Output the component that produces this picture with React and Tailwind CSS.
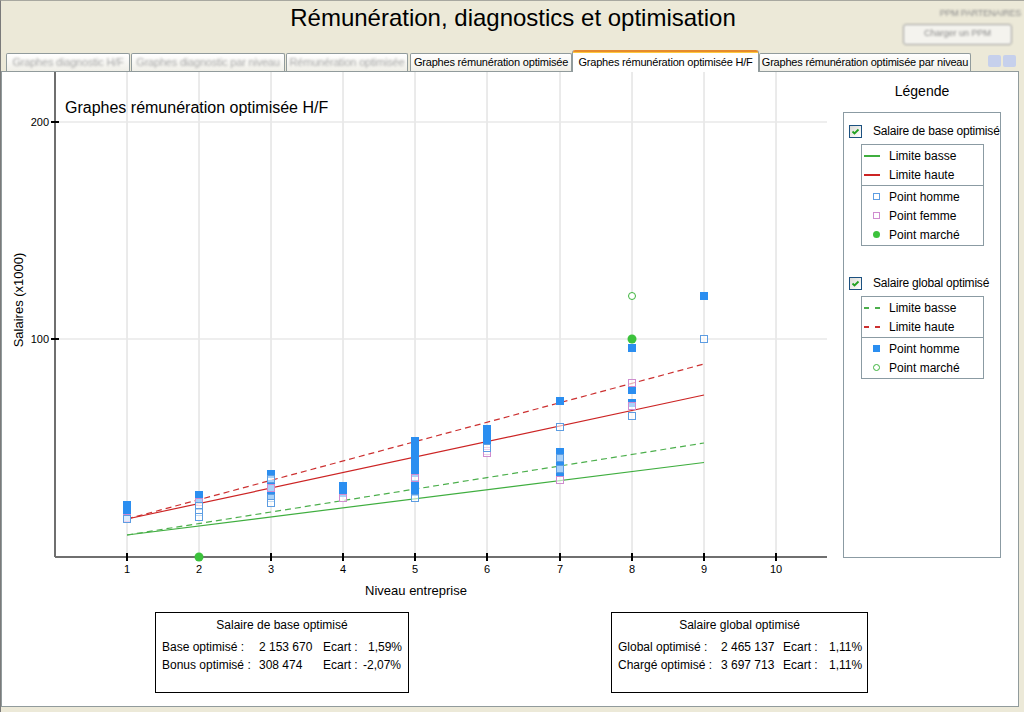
import React from 'react';

const FONT = { fontFamily: '"Liberation Sans", Arial, sans-serif' };

const levelX = [127, 199, 271, 343, 415, 487, 560, 632, 704, 776];
const X_AXIS = 557;

// filled blue squares (global, homme)
const filled = [
  [1, 505], [1, 508], [1, 511], [1, 514], [1, 517],
  [2, 495], [2, 498],
  [3, 474], [3, 484], [3, 487], [3, 490], [3, 493], [3, 496],
  [4, 486], [4, 490], [4, 493],
  [5, 441], [5, 445], [5, 449], [5, 453], [5, 457], [5, 461], [5, 465], [5, 469], [5, 473], [5, 484], [5, 488], [5, 492],
  [6, 429], [6, 433], [6, 437], [6, 441],
  [7, 401], [7, 452], [7, 456], [7, 460], [7, 464], [7, 468], [7, 472],
  [8, 348], [8, 390], [8, 403],
  [9, 296],
];
// hollow blue squares (base, homme)
const hollowBlue = [
  [1, 519], [2, 506], [2, 512], [2, 517], [3, 479], [3, 498], [3, 503],
  [5, 498], [6, 448], [7, 427], [7, 458], [7, 469], [8, 416], [9, 339],
];
// hollow pink squares (base, femme)
const hollowPink = [
  [1, 518], [2, 502], [3, 488], [4, 498], [5, 478], [6, 451], [6, 453], [7, 480], [8, 383], [8, 406],
];

const lines = [
  { y1: 535, y2: 462.5, color: '#3fae3f', dash: null },
  { y1: 535, y2: 443, color: '#4caf4c', dash: '6 4' },
  { y1: 519, y2: 395, color: '#cc2424', dash: null },
  { y1: 519, y2: 364, color: '#cc3030', dash: '6 4' },
];

function Chart() {
  return (
    <svg width="838" height="540" viewBox="2 72 838 540" className="block shrink-0">
      {/* grid */}
      {levelX.map((x) => (
        <line key={x} x1={x} y1={72} x2={x} y2={X_AXIS} stroke="#d6d6d6" strokeWidth="1" />
      ))}
      <line x1={55} y1={122} x2={827} y2={122} stroke="#e8e8e8" strokeWidth="1.6" />
      <line x1={55} y1={339} x2={827} y2={339} stroke="#e8e8e8" strokeWidth="1.6" />

      {/* axes */}
      <line x1={55} y1={72} x2={55} y2={X_AXIS} stroke="#6f6f6f" strokeWidth="2" />
      <line x1={55} y1={X_AXIS} x2={827} y2={X_AXIS} stroke="#6f6f6f" strokeWidth="2" />
      {levelX.map((x) => (
        <line key={'t' + x} x1={x} y1={553} x2={x} y2={561} stroke="#000" strokeWidth="2" />
      ))}
      <line x1={51} y1={122} x2={59} y2={122} stroke="#000" strokeWidth="2" />
      <line x1={51} y1={339} x2={59} y2={339} stroke="#000" strokeWidth="2" />

      {/* labels */}
      <g style={FONT} fontSize="11" fill="#000">
        {levelX.map((x, i) => (
          <text key={'l' + x} x={x} y={569} textAnchor="middle" dominantBaseline="central">{i + 1}</text>
        ))}
        <text x={49} y={122} textAnchor="end" dominantBaseline="central">200</text>
        <text x={49} y={339} textAnchor="end" dominantBaseline="central">100</text>
      </g>
      <text x={18} y={300} transform="rotate(-90 18 300)" textAnchor="middle" dominantBaseline="central" fontSize="13" style={FONT} fill="#000">Salaires (x1000)</text>
      <text x={416} y={590} textAnchor="middle" dominantBaseline="central" fontSize="13" style={FONT} fill="#000">Niveau entreprise</text>
      <text x={65} y={107} dominantBaseline="central" fontSize="16" style={FONT} fill="#000">Graphes rémunération optimisée H/F</text>

      {/* trend lines */}
      {lines.map((l, i) => (
        <line key={'tr' + i} x1={127} y1={l.y1} x2={704} y2={l.y2} stroke={l.color} strokeWidth="1.2" strokeDasharray={l.dash || undefined} />
      ))}

      {/* points */}
      {filled.map(([n, y], i) => (
        <rect key={'f' + i} x={levelX[n - 1] - 4} y={y - 4} width="8" height="8" fill="#2b8ef0" />
      ))}
      {hollowPink.map(([n, y], i) => (
        <rect key={'p' + i} x={levelX[n - 1] - 3.5} y={y - 3.5} width="7" height="7" fill="#fff" fillOpacity="0.6" stroke="#cf8ccf" strokeWidth="1" />
      ))}
      {hollowBlue.map(([n, y], i) => (
        <rect key={'h' + i} x={levelX[n - 1] - 3.5} y={y - 3.5} width="7" height="7" fill="#fff" fillOpacity="0.6" stroke="#5d9de2" strokeWidth="1" />
      ))}
      <circle cx={199} cy={557} r="4.5" fill="#3cc23c" />
      <circle cx={632} cy={339} r="4.5" fill="#3cc23c" />
      <circle cx={632} cy={296} r="3.5" fill="#fff" stroke="#3cb43c" strokeWidth="1" />
    </svg>
  );
}

function CheckBox() {
  return (
    <div className="w-[13px] h-[13px] shrink-0 border border-[#1c5180] bg-gradient-to-br from-[#dcdcd7] to-white flex items-center justify-center">
      <svg width="9" height="9" viewBox="0 0 9 9">
        <path d="M1.5 4.5 L3.5 6.5 L7.5 2.5" fill="none" stroke="#21a121" strokeWidth="1.8" />
      </svg>
    </div>
  );
}

function Icon({ kind }) {
  if (kind === 'green' || kind === 'red') {
    return <div className={`ml-[2px] w-[16px] h-[2px] ${kind === 'green' ? 'bg-[#3fae3f]' : 'bg-[#cc2424]'}`} />;
  }
  if (kind === 'greenDash' || kind === 'redDash') {
    const c = kind === 'greenDash' ? 'bg-[#4caf4c]' : 'bg-[#cc3030]';
    return (
      <div className="ml-[2px] flex gap-[6px]">
        <div className={`w-[5px] h-[2px] ${c}`} />
        <div className={`w-[5px] h-[2px] ${c}`} />
      </div>
    );
  }
  if (kind === 'hollowBlue') return <div className="ml-[11px] w-[7px] h-[7px] border border-[#5d9de2]" />;
  if (kind === 'hollowPink') return <div className="ml-[11px] w-[7px] h-[7px] border border-[#cf8ccf]" />;
  if (kind === 'greenDot') return <div className="ml-[11px] w-[7px] h-[7px] rounded-full bg-[#3cc23c]" />;
  if (kind === 'blueSquare') return <div className="ml-[11px] w-[7px] h-[7px] bg-[#2b8ef0]" />;
  return <div className="ml-[11px] w-[7px] h-[7px] rounded-full border border-[#3cb43c]" />;
}

function Row({ icon, label }) {
  return (
    <div className="h-[19px] flex items-center">
      <div className="w-[27px] flex items-center">
        <Icon kind={icon} />
      </div>
      <span>{label}</span>
    </div>
  );
}

function LegendGroup({ title, lines: ls, points, mt }) {
  return (
    <div className={mt}>
      <div className="h-[18px] flex items-center ml-[5px] whitespace-nowrap">
        <CheckBox />
        <span className="ml-[11px] tracking-[-0.2px]">{title}</span>
      </div>
      <div className="mt-[4px] ml-[17px] w-[123px] border border-[#8b9ba3]">
        <div className="py-[1px]">
          {ls.map((r) => <Row key={r.label} {...r} />)}
        </div>
        <div className="py-[1px] border-t border-[#8b9ba3]">
          {points.map((r) => <Row key={r.label} {...r} />)}
        </div>
      </div>
    </div>
  );
}

function Legend() {
  return (
    <div className="w-[178px] flex flex-col text-[12px] text-black">
      <div className="mt-[10px] ml-[3px] w-[158px] text-center text-[14px] leading-[18px]">Légende</div>
      <div className="mt-[12px] ml-[3px] w-[158px] h-[446px] border border-[#8b9ba3] bg-white">
        <LegendGroup
          mt="mt-[9px]"
          title="Salaire de base optimisé"
          lines={[{ icon: 'green', label: 'Limite basse' }, { icon: 'red', label: 'Limite haute' }]}
          points={[
            { icon: 'hollowBlue', label: 'Point homme' },
            { icon: 'hollowPink', label: 'Point femme' },
            { icon: 'greenDot', label: 'Point marché' },
          ]}
        />
        <LegendGroup
          mt="mt-[28px]"
          title="Salaire global optimisé"
          lines={[{ icon: 'greenDash', label: 'Limite basse' }, { icon: 'redDash', label: 'Limite haute' }]}
          points={[
            { icon: 'blueSquare', label: 'Point homme' },
            { icon: 'greenRing', label: 'Point marché' },
          ]}
        />
      </div>
    </div>
  );
}

function SummaryBox({ title, rows, cols, className }) {
  return (
    <div className={`h-[81px] border border-black bg-white text-[12px] text-black ${className}`}>
      <div className="mt-[3px] text-center leading-[18px]">{title}</div>
      <div className="mt-[4px] pl-[6px]">
        {rows.map((r, i) => (
          <div key={i} className="flex leading-[18px] whitespace-nowrap">
            <span className={cols[0]}>{r[0]}</span>
            <span className={cols[1]}>{r[1]}</span>
            <span className={cols[2]}>Ecart :</span>
            <span className={r[3]}>{r[2]}</span>
          </div>
        ))}
      </div>
    </div>
  );
}

const tabs = [
  { label: 'Graphes diagnostic H/F', w: 'w-[124px]', ml: 'ml-[5px]', off: true },
  { label: 'Graphes diagnostic par niveau', w: 'w-[154px]', ml: 'ml-[1px]', off: true },
  { label: 'Rémunération optimisée', w: 'w-[122px]', ml: 'ml-[1px]', off: true },
  { label: 'Graphes rémunération optimisée', w: 'w-[162px]', ml: 'ml-[2px]' },
  { label: 'Graphes rémunération optimisée H/F', w: 'w-[187px]', ml: 'ml-0', active: true },
  { label: 'Graphes rémunération optimisée par niveau', w: 'w-[212px]', ml: 'ml-0' },
];

export default function App() {
  return (
    <div className="w-[1024px] h-[712px] bg-[#ece9d8] border-t border-[#a8a8a0] border-l border-l-[#7a7a7a] flex flex-col overflow-hidden" style={FONT}>
      {/* header */}
      <div className="h-[49px] relative shrink-0">
        <div className="pt-[3px] text-center text-[24px] leading-[28px] text-black pl-[1px]">Rémunération, diagnostics et optimisation</div>
        <div className="absolute right-[3px] top-[6px] flex flex-col items-end blur-[0.9px]">
          <div className="text-[9px] text-[#8a8a8a] tracking-tight">PPM PARTENAIRES</div>
          <div className="mt-[3px] mr-[9px] w-[109px] h-[21px] rounded-[3px] border border-[#9a9a9a] bg-[#f4f3ee] flex items-center justify-center text-[9px] text-[#888]">Charger un PPM</div>
        </div>
      </div>

      {/* tabs */}
      <div className="h-[22px] flex items-end shrink-0 relative z-10">
        {tabs.map((t) =>
          t.active ? (
            <div key={t.label} className={`${t.w} ${t.ml} h-[22px] bg-white border-x border-[#919b9c] rounded-t-[3px] flex flex-col`}>
              <div className="h-[2px] bg-[#e68b2c] rounded-t-[3px]" />
              <div className="h-[1px] bg-[#ffc83c]" />
              <div className="flex-1 flex items-center justify-center text-[11px] text-black whitespace-nowrap tracking-[-0.2px]">{t.label}</div>
            </div>
          ) : (
            <div key={t.label} className={`${t.w} ${t.ml} h-[18px] mb-[1px] border border-b-0 border-[#919b9c] rounded-t-[2px] bg-gradient-to-b from-white to-[#f0efe8] flex items-center justify-center text-[11px] whitespace-nowrap tracking-[-0.2px]`}>
              <span className={t.off ? 'text-[#a9a9a9] blur-[0.8px]' : 'text-black'}>{t.label}</span>
            </div>
          )
        )}
        <div className="ml-[17px] mb-[5px] flex gap-[2px] blur-[0.7px]">
          <div className="w-[13px] h-[12px] bg-[#c6d0ec] rounded-[2px]" />
          <div className="w-[13px] h-[12px] bg-[#c6d0ec] rounded-[2px]" />
        </div>
      </div>

      {/* panel */}
      <div className="-mt-[1px] w-[1018px] h-[636px] bg-white border border-[#919b9c] flex flex-col shrink-0">
        <div className="flex h-[540px]">
          <Chart />
          <Legend />
        </div>
        <div className="flex items-start">
          <SummaryBox
            className="ml-[153px] w-[254px]"
            title="Salaire de base optimisé"
            cols={['w-[97px]', 'w-[64px]', 'w-[40px]']}
            rows={[
              ['Base optimisé :', '2 153 670', '1,59%', 'pl-[5px]'],
              ['Bonus optimisé :', '308 474', '-2,07%', ''],
            ]}
          />
          <SummaryBox
            className="ml-[202px] w-[257px]"
            title="Salaire global optimisé"
            cols={['w-[103px]', 'w-[62px]', 'w-[46px]']}
            rows={[
              ['Global optimisé :', '2 465 137', '1,11%', ''],
              ['Chargé optimisé :', '3 697 713', '1,11%', ''],
            ]}
          />
        </div>
      </div>
    </div>
  );
}
